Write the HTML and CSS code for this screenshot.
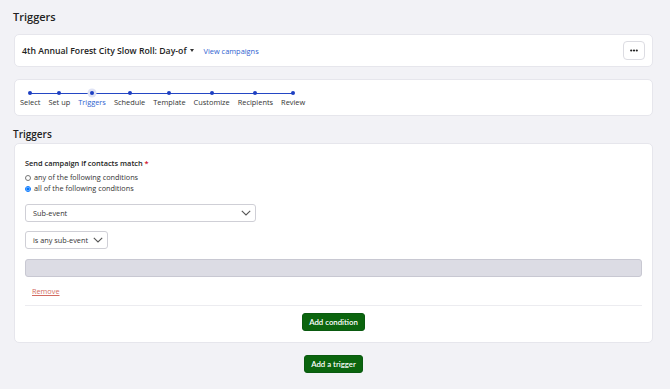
FILE: index.html
```html
<!DOCTYPE html>
<html lang="en">
<head>
    <meta charset="UTF-8">
    <meta name="viewport" content="width=device-width, initial-scale=1.0">
    <title>Triggers</title>
    <link rel="stylesheet" href="styles.css">
</head>
<body>
    <h1 class="page-title">Triggers</h1>

    <div class="card campaign-bar">
        <div class="campaign-name">4th Annual Forest City Slow Roll: Day-of <span class="caret"></span></div>
        <a class="link" href="#">View campaigns</a>
        <button class="more-btn">
            <svg width="8" height="3" viewBox="0 0 8 3"><circle cx="1.2" cy="1.5" r="1.1" fill="#222"/><circle cx="4" cy="1.5" r="1.1" fill="#222"/><circle cx="6.8" cy="1.5" r="1.1" fill="#222"/></svg>
        </button>
    </div>

    <div class="card stepper-card">
        <ol class="stepper">
            <li class="step"><span class="dot"></span><span class="label">Select</span></li>
            <li class="step"><span class="dot"></span><span class="label">Set up</span></li>
            <li class="step active"><span class="dot"></span><span class="label">Triggers</span></li>
            <li class="step"><span class="dot"></span><span class="label">Schedule</span></li>
            <li class="step"><span class="dot"></span><span class="label">Template</span></li>
            <li class="step"><span class="dot"></span><span class="label">Customize</span></li>
            <li class="step"><span class="dot"></span><span class="label">Recipients</span></li>
            <li class="step"><span class="dot"></span><span class="label">Review</span></li>
        </ol>
    </div>

    <h2 class="section-title">Triggers</h2>

    <div class="card trigger-card">
        <div class="field-label">Send campaign if contacts match <span class="req">*</span></div>
        <label class="radio"><input type="radio" name="match"> any of the following conditions</label>
        <label class="radio"><input type="radio" name="match" checked> all of the following conditions</label>

        <div class="select wide">
            <span>Sub-event</span>
            <svg width="10" height="6" viewBox="0 0 10 6"><path d="M0.8 0.8L5 5l4.2-4.2" fill="none" stroke="#555" stroke-width="1.1"/></svg>
        </div>
        <div class="select narrow">
            <span>is any sub-event</span>
            <svg width="10" height="6" viewBox="0 0 10 6"><path d="M0.8 0.8L5 5l4.2-4.2" fill="none" stroke="#555" stroke-width="1.1"/></svg>
        </div>
        <div class="disabled-input"></div>

        <a class="remove" href="#">Remove</a>

        <div class="card-footer">
            <button class="btn-green">Add condition</button>
        </div>
    </div>

    <div class="bottom-actions">
        <button class="btn-green">Add a trigger</button>
    </div>
</body>
</html>
```

FILE: styles.css
```css
body {
    margin: 0;
    padding: 8px 17px 0 14px;
    font-family: "Open Sans", Arial, sans-serif;
    background-color: #f2f2f6;
    color: #222;
}
.page-title {
    margin: 0 0 9px -1px;
    font-size: 11px;
    font-weight: 600;
    line-height: 17px;
}
.card {
    background-color: #fff;
    border: 1px solid #e6e6ec;
    border-radius: 5px;
}
.campaign-bar {
    height: 31px;
    display: flex;
    align-items: center;
    padding: 0 7px 0 7px;
}
.campaign-name {
    font-size: 8.7px;
    font-weight: 600;
    display: flex;
    align-items: center;
}
.caret {
    display: inline-block;
    margin-left: 3px;
    border-left: 2.5px solid transparent;
    border-right: 2.5px solid transparent;
    border-top: 3px solid #333;
}
.link {
    margin-left: 10px;
    font-size: 7.4px;
    color: #2f5fd0;
    text-decoration: none;
}
.more-btn {
    margin-left: auto;
    width: 22px;
    height: 19px;
    padding: 0;
    background: #fff;
    border: 1px solid #dcdce2;
    border-radius: 4px;
    display: flex;
    align-items: center;
    justify-content: center;
}
.stepper-card {
    margin-top: 12px;
    height: 35px;
    padding: 0 5px;
}
.stepper {
    list-style: none;
    margin: 0;
    padding: 0;
    display: flex;
    gap: 8px;
}
.step {
    position: relative;
    display: flex;
    flex-direction: column;
    align-items: center;
    padding-top: 11px;
}
.step::before,
.step::after {
    content: "";
    position: absolute;
    top: 12.5px;
    height: 1px;
    background-color: #2447c4;
}
.step::before {
    left: 0;
    right: 50%;
}
.step::after {
    left: 50%;
    right: -8px;
}
.step:first-child::before,
.step:last-child::after {
    display: none;
}
.dot {
    position: relative;
    z-index: 1;
    width: 4px;
    height: 4px;
    border-radius: 50%;
    background-color: #1d3fc2;
    margin-bottom: 1px;
}
.step.active .dot {
    box-shadow: 0 0 0 2.5px #dfe3f5;
}
.label {
    font-size: 7.4px;
    color: #333;
    line-height: 12px;
}
.step.active .label {
    color: #2f5fd0;
}
.section-title {
    margin: 11px 0 1px -1px;
    font-size: 10px;
    font-weight: 600;
    line-height: 15px;
}
.trigger-card {
    padding: 14px 10px 11px 10px;
}
.field-label {
    font-size: 7.4px;
    font-weight: 600;
    line-height: 11px;
    margin-bottom: 3px;
}
.req {
    color: #d0021b;
}
.radio {
    display: flex;
    align-items: center;
    font-size: 7.3px;
    line-height: 11px;
    color: #333;
}
.radio input {
    margin: 0 3px 0 0;
    width: 6px;
    height: 6px;
}
.select {
    box-sizing: border-box;
    margin-top: 10px;
    height: 18px;
    border: 1px solid #cfcfd6;
    border-radius: 3px;
    display: flex;
    align-items: center;
    justify-content: space-between;
    padding: 0 4px 0 7px;
    font-size: 7.3px;
    color: #333;
}
.select.wide {
    width: 231px;
}
.select.narrow {
    width: 83px;
    margin-top: 9px;
}
.disabled-input {
    box-sizing: border-box;
    margin-top: 10px;
    height: 18px;
    background-color: #dcdce4;
    border: 1px solid #c8c8d2;
    border-radius: 3px;
}
.remove {
    display: inline-block;
    margin: 8px 0 0 7px;
    font-size: 7.3px;
    line-height: 11px;
    color: #d26a60;
}
.card-footer {
    margin-top: 6px;
    border-top: 1px solid #ececf0;
    padding-top: 7px;
    display: flex;
    justify-content: center;
}
.btn-green {
    font-family: Lato, "Open Sans", sans-serif;
    font-size: 7.8px;
    font-weight: 600;
    color: #fff;
    background-color: #0b650e;
    border: 1px solid #0a5a10;
    border-radius: 3px;
    height: 18px;
    padding: 0 6px;
}
.bottom-actions {
    margin-top: 12px;
    display: flex;
    justify-content: center;
}
```
